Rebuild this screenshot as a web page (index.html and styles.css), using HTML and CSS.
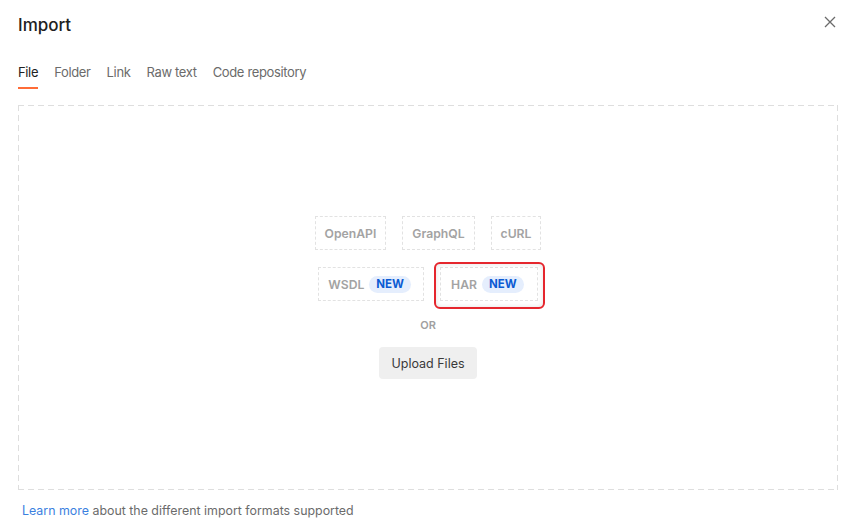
FILE: index.html
```html
<!DOCTYPE html>
<html lang="en">
<head>
<meta charset="utf-8">
<title>Import</title>
<link rel="stylesheet" href="styles.css">
</head>
<body>
<div class="modal">
  <div class="header">
    <h1 class="title">Import</h1>
    <button class="close" aria-label="Close">
      <svg width="12" height="12" viewBox="0 0 12 12"><path d="M1 1L11 11M11 1L1 11" stroke="#6b6b6b" stroke-width="1.3" fill="none"/></svg>
    </button>
  </div>
  <div class="tabs">
    <span class="tab active">File</span>
    <span class="tab">Folder</span>
    <span class="tab">Link</span>
    <span class="tab">Raw text</span>
    <span class="tab">Code repository</span>
  </div>
  <div class="dropzone">
    <div class="formats">
      <div class="row">
        <span class="chip">OpenAPI</span>
        <span class="chip">GraphQL</span>
        <span class="chip">cURL</span>
      </div>
      <div class="row">
        <span class="chip with-badge">WSDL <span class="badge">NEW</span></span>
        <span class="chip with-badge highlighted">HAR <span class="badge">NEW</span></span>
      </div>
    </div>
    <div class="or">OR</div>
    <button class="upload">Upload Files</button>
  </div>
  <p class="footer"><a class="link">Learn more</a> about the different import formats supported</p>
</div>
</body>
</html>
```
FILE: styles.css
```css
html, body {
  margin: 0;
  padding: 0;
  background: #ffffff;
}
body {
  font-family: Inter, "Noto Sans", "Liberation Sans", sans-serif;
  color: #212121;
}
.modal {
  width: 850px;
  height: 532px;
  box-sizing: border-box;
  padding: 0 13px 0 18px;
}
.header {
  display: flex;
  justify-content: space-between;
  align-items: flex-start;
  height: 62px;
}
.title {
  margin: 13px 0 0;
  font-size: 17px;
  line-height: 24px;
  font-weight: 500;
  color: #212121;
}
.close {
  margin-top: 16px;
  margin-right: 1px;
  padding: 0;
  border: 0;
  background: none;
  width: 12px;
  height: 12px;
  display: block;
}
.close svg { display: block; }
.tabs {
  display: flex;
  gap: 16px;
  height: 27px;
}
.tab {
  font-size: 13px;
  letter-spacing: -0.35px;
  line-height: 20px;
  color: #6b6b6b;
  padding-bottom: 5px;
  border-bottom: 2px solid transparent;
}
.tab.active {
  color: #212121;
  border-bottom-color: #ff6c37;
}
.dropzone {
  margin-top: 16px;
  width: 820px;
  height: 385px;
  box-sizing: border-box;
  background-image:
    repeating-linear-gradient(90deg, #dedede 0 6px, transparent 6px 10px),
    repeating-linear-gradient(90deg, #dedede 0 6px, transparent 6px 10px),
    repeating-linear-gradient(180deg, #dedede 0 6px, transparent 6px 10px),
    repeating-linear-gradient(180deg, #dedede 0 6px, transparent 6px 10px);
  background-size: 100% 1px, 100% 1px, 1px 100%, 1px 100%;
  background-position: 0 0, 0 100%, 0 0, 100% 0;
  background-repeat: no-repeat;
  display: flex;
  flex-direction: column;
  align-items: center;
  justify-content: center;
  padding-left: 0;
}
.formats {
  display: flex;
  flex-direction: column;
  align-items: center;
  gap: 17px;
}
.row {
  display: flex;
  gap: 16px;
}
.chip {
  display: flex;
  align-items: center;
  height: 34px;
  box-sizing: border-box;
  padding: 0 9px;
  border: 1px dashed #e2e2e2;
  font-size: 12.2px;
  font-weight: 600;
  color: #a3a3a3;
  position: relative;
}
.chip.with-badge {
  padding: 0 12px 0 9px;
  gap: 5px;
}
.chip.highlighted {
  padding: 0 13px 0 10px;
}
.badge {
  display: inline-block;
  height: 17px;
  line-height: 17px;
  padding: 0 7px;
  border-radius: 9px;
  background: #e5eefd;
  color: #0c5bd3;
  font-size: 11.5px;
  font-weight: 700;
}
.highlighted::after {
  content: "";
  position: absolute;
  left: -7px;
  right: -8px;
  top: -6px;
  bottom: -9px;
  border: 2px solid #e5262d;
  border-radius: 6px;
  box-shadow: inset 0 0 5px rgba(0, 0, 0, 0.12);
}
.or {
  margin-top: 17px;
  font-size: 11px;
  line-height: 14px;
  font-weight: 600;
  color: #a0a0a0;
}
.upload {
  margin-top: 15px;
  height: 32px;
  padding: 0 12px;
  border: 0;
  border-radius: 4px;
  background: #efefef;
  font-family: inherit;
  font-size: 12.5px;
  color: #3a3a3a;
}
.footer {
  margin: 12px 0 0;
  padding-left: 4px;
  font-size: 12.4px;
  line-height: 18px;
  color: #6b6b6b;
}
.link {
  color: #3b7fe0;
}
```
